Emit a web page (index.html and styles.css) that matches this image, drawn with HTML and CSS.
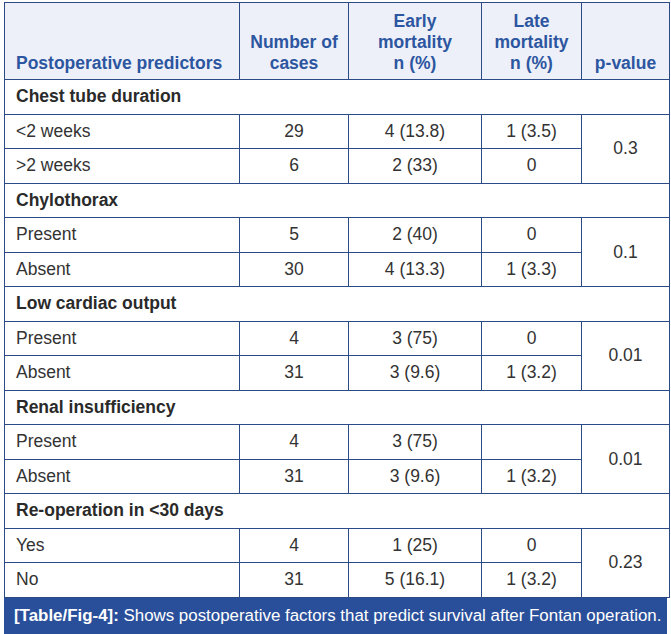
FILE: index.html
```html
<!DOCTYPE html>
<html>
<head>
<meta charset="utf-8">
<link rel="stylesheet" href="styles.css">
</head>
<body>
<div class="page">
<table class="tbl">
<colgroup>
<col class="c1"><col class="c2"><col class="c3"><col class="c4"><col class="c5">
</colgroup>
<thead>
<tr class="head">
<th class="left">Postoperative predictors</th>
<th>Number of<br>cases</th>
<th>Early<br>mortality<br>n (%)</th>
<th>Late<br>mortality<br>n (%)</th>
<th>p-value</th>
</tr>
</thead>
<tbody>
<tr class="sec"><td colspan="5">Chest tube duration</td></tr>
<tr><td class="left">&lt;2 weeks</td><td>29</td><td>4 (13.8)</td><td>1 (3.5)</td><td rowspan="2">0.3</td></tr>
<tr><td class="left">&gt;2 weeks</td><td>6</td><td>2 (33)</td><td>0</td></tr>
<tr class="sec"><td colspan="5">Chylothorax</td></tr>
<tr><td class="left">Present</td><td>5</td><td>2 (40)</td><td>0</td><td rowspan="2">0.1</td></tr>
<tr><td class="left">Absent</td><td>30</td><td>4 (13.3)</td><td>1 (3.3)</td></tr>
<tr class="sec"><td colspan="5">Low cardiac output</td></tr>
<tr><td class="left">Present</td><td>4</td><td>3 (75)</td><td>0</td><td rowspan="2">0.01</td></tr>
<tr><td class="left">Absent</td><td>31</td><td>3 (9.6)</td><td>1 (3.2)</td></tr>
<tr class="sec"><td colspan="5">Renal insufficiency</td></tr>
<tr><td class="left">Present</td><td>4</td><td>3 (75)</td><td></td><td rowspan="2">0.01</td></tr>
<tr><td class="left">Absent</td><td>31</td><td>3 (9.6)</td><td>1 (3.2)</td></tr>
<tr class="sec"><td colspan="5">Re-operation in &lt;30 days</td></tr>
<tr><td class="left">Yes</td><td>4</td><td>1 (25)</td><td>0</td><td rowspan="2">0.23</td></tr>
<tr><td class="left">No</td><td>31</td><td>5 (16.1)</td><td>1 (3.2)</td></tr>
</tbody>
</table>
<div class="caption"><span class="cap-label">[Table/Fig-4]:</span> Shows postoperative factors that predict survival after Fontan operation.</div>
</div>
</body>
</html>
```
FILE: styles.css
```css
html, body {
  margin: 0;
  padding: 0;
  background: #ffffff;
}
.page {
  padding: 2px 0 0 4px;
  width: 665px;
  font-family: "Liberation Sans", Arial, sans-serif;
}
.tbl {
  border-collapse: collapse;
  width: 665px;
  table-layout: fixed;
  font-size: 17.5px;
  color: #333333;
}
.c1 { width: 235px; }
.c2 { width: 109px; }
.c3 { width: 133px; }
.c4 { width: 100px; }
.c5 { width: 88px; }
.tbl th, .tbl td {
  border: 1px solid #2b4a86;
  padding: 0;
  text-align: center;
  vertical-align: middle;
}
.head th {
  height: 71px;
  background: #eef0f9;
  color: #2c56a0;
  font-weight: bold;
  line-height: 21px;
  vertical-align: bottom;
  padding-bottom: 5px;
}
.tbl tbody tr {
  height: 34.5px;
}
.tbl .left {
  text-align: left;
  padding-left: 11px;
}
.sec td {
  text-align: left;
  padding-left: 11px;
  font-weight: bold;
  color: #2a2a2a;
}
.caption {
  background: #2a4f9a;
  color: #ffffff;
  height: 36px;
  line-height: 36px;
  padding-left: 10px;
  font-size: 16.9px;
  white-space: nowrap;
  width: 653px;
}
.cap-label {
  font-weight: bold;
}
```
